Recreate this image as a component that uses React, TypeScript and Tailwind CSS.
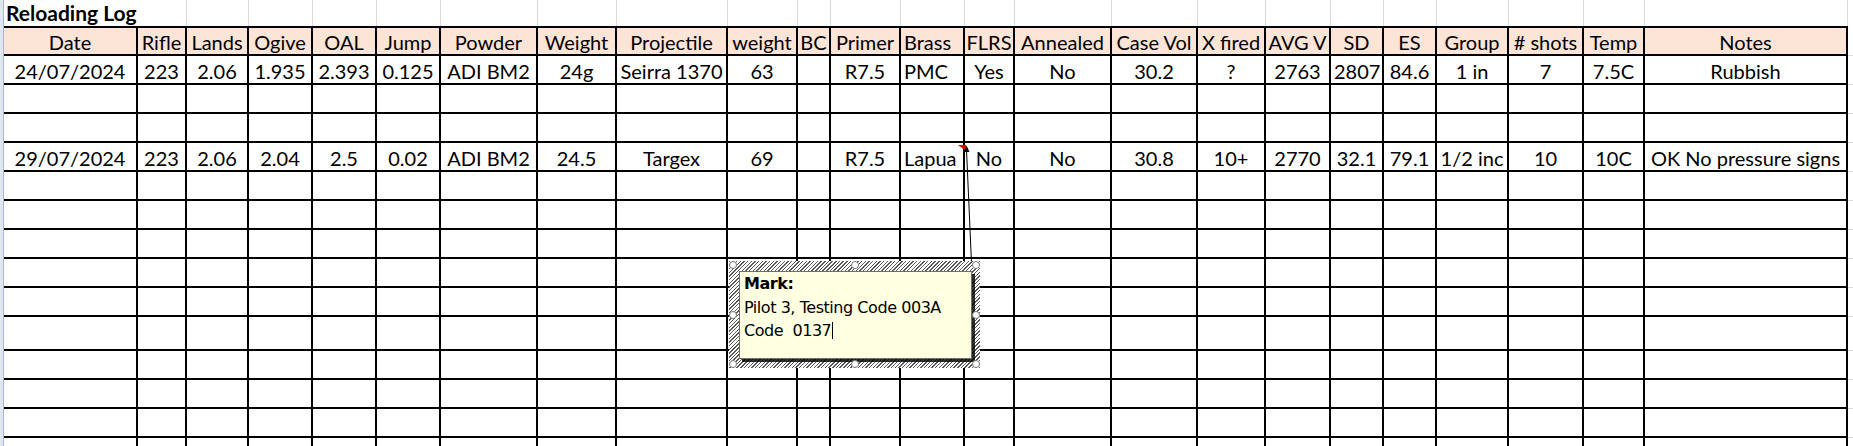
import React from "react";

const GRID =
  "grid grid-cols-[134px_49px_62px_64px_64px_64px_97px_79px_111px_70px_33px_70px_64px_50px_97px_86px_68px_65px_53px_53px_72px_75px_61px_203px_1fr]";

const headers = [
  "Date", "Rifle", "Lands", "Ogive", "OAL", "Jump", "Powder", "Weight",
  "Projectile", "weight", "BC", "Primer", "Brass", "FLRS", "Annealed",
  "Case Vol", "X fired", "AVG V", "SD", "ES", "Group", "# shots", "Temp", "Notes",
];

const filled: Record<number, string[]> = {
  0: [
    "24/07/2024", "223", "2.06", "1.935", "2.393", "0.125", "ADI BM2", "24g",
    "Seirra 1370", "63", "", "R7.5", "PMC", "Yes", "No", "30.2", "?", "2763",
    "2807", "84.6", "1 in", "7", "7.5C", "Rubbish",
  ],
  3: [
    "29/07/2024", "223", "2.06", "2.04", "2.5", "0.02", "ADI BM2", "24.5",
    "Targex", "69", "", "R7.5", "Lapua", "No", "No", "30.8", "10+", "2770",
    "32.1", "79.1", "1/2 inc", "10", "10C", "OK No pressure signs",
  ],
};

// row 10 of the sheet is taller than the rest
const rowHeights = Array.from({ length: 14 }, (_, i) => (i === 9 ? "h-[34px]" : "h-[29px]"));

function cellAlign(col: number, row: number) {
  if (col === 12) return "justify-start pl-[3px]";
  if (col === 18 && row === 0) return "justify-start pl-[3px]";
  return "justify-center";
}

const handles = [
  [733, 265], [855, 265], [976, 265],
  [733, 315], [976, 315],
  [733, 364], [855, 364], [976, 364],
];

export default function App() {
  return (
    <div className="relative h-[446px] w-full overflow-hidden bg-white font-[Lato,sans-serif] text-[20px] text-black">
      <div className="flex">
        <div className="w-[4px] shrink-0 border-r border-[#a9b8cc] bg-[#dfe7f2]" />

        <div className="min-w-0 flex-1">
          {/* title row */}
          <div className={`${GRID} h-[26px]`}>
            <div className="relative z-10 flex items-end whitespace-nowrap pl-[2px] pb-[1px] text-[21px] font-bold leading-[24px]">
              Reloading Log
            </div>
            {headers.slice(1).map((h) => (
              <div key={h} className="border-r border-[#dadada]" />
            ))}
            <div />
          </div>

          {/* header row */}
          <div className={`${GRID} h-[30px]`}>
            {headers.map((h, i) => (
              <div
                key={h}
                className={`flex items-end overflow-hidden whitespace-nowrap border-t-2 border-r-2 border-b-2 border-black bg-[#fce4d6] leading-[24px] ${cellAlign(i, -1)}`}
              >
                {h}
              </div>
            ))}
            <div className="border-b border-[#dadada]" />
          </div>

          {/* body rows */}
          {rowHeights.map((hClass, r) => (
            <div key={r} className={`${GRID} ${hClass}`}>
              {headers.map((h, c) => (
                <div
                  key={h}
                  className={`flex items-end overflow-hidden whitespace-nowrap border-r-2 border-b-2 border-black leading-[24px] ${cellAlign(c, r)}`}
                >
                  {filled[r]?.[c] ?? ""}
                </div>
              ))}
              <div className="border-b border-[#dadada]" />
            </div>
          ))}
        </div>
      </div>

      {/* comment indicator + connector */}
      <svg className="pointer-events-none absolute inset-0 h-[446px] w-[1853px]">
        <polygon points="958,145 966,145 966,151" fill="#e60000" />
        <line x1="966.5" y1="150" x2="971.5" y2="263" stroke="#000" strokeWidth="1" />
        <polygon points="963.5,152 966.5,145.5 969.5,152" fill="#000" />
      </svg>

      {/* comment box being edited */}
      <div className="absolute left-[729px] top-[261px] h-[107px] w-[251px] bg-[repeating-linear-gradient(135deg,#5a5a5a_0px,#5a5a5a_1px,#ffffff_1px,#ffffff_2.6px)]" />
      <div className="absolute left-[739px] top-[271px] h-[88px] w-[233px] border border-[#6f6f6f] bg-[#ffffe1] pl-[4px] font-['DejaVu_Sans',sans-serif] text-[16px] leading-[23.5px] tracking-[-0.45px] shadow-[3px_3px_0_rgba(0,0,0,0.8)]">
        <div className="font-bold">Mark:</div>
        <div className="whitespace-pre">Pilot 3, Testing Code 003A</div>
        <div className="whitespace-pre">
          Code  0137
          <span className="ml-[1px] inline-block h-[17px] w-px bg-black align-[-3px]" />
        </div>
      </div>
      {handles.map(([x, y]) => (
        <div
          key={`${x}-${y}`}
          className="absolute h-[8px] w-[8px] -translate-x-1/2 -translate-y-1/2 rounded-full border border-[#7a7a7a] bg-white"
          style={{ left: x, top: y }}
        />
      ))}
    </div>
  );
}
